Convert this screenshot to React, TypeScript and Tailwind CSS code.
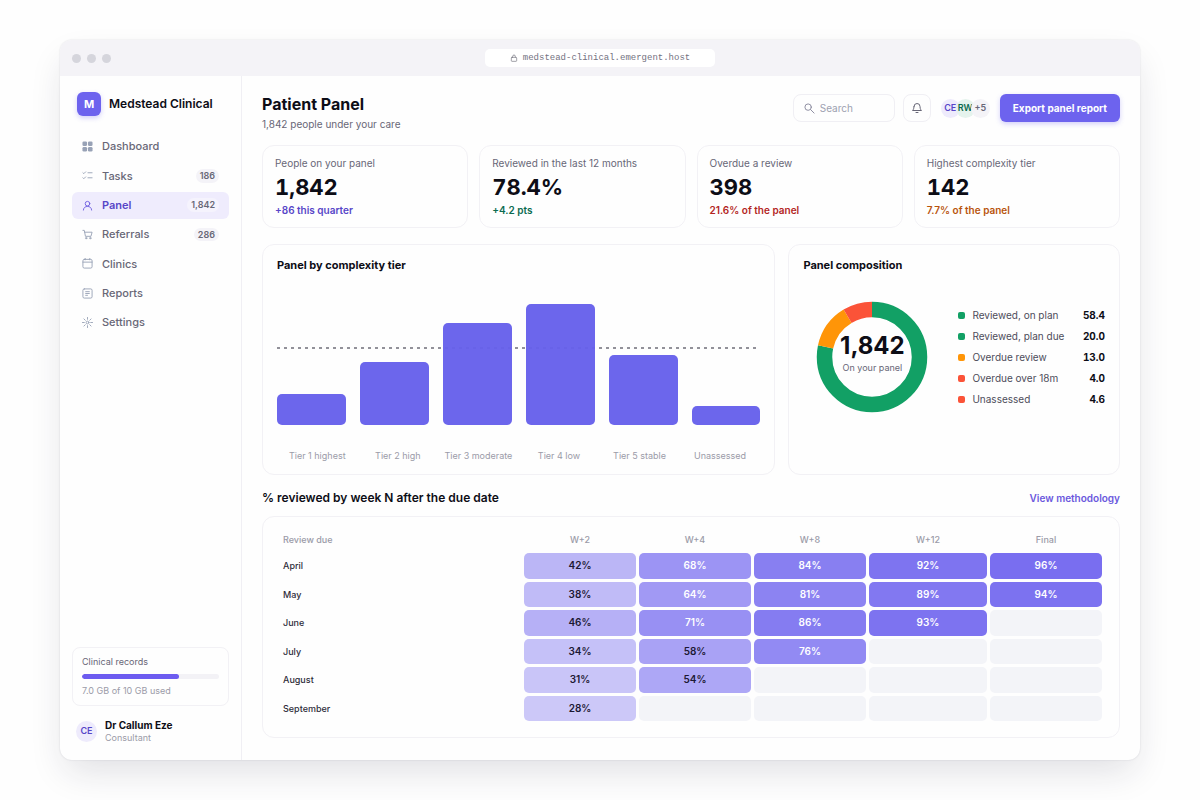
import type { ReactNode } from "react";

const ICONS: Record<string, ReactNode> = {
  dashboard: (
    <g fill="currentColor" stroke="none">
      <rect x="1" y="1" width="10" height="10" rx="3" />
      <rect x="13" y="1" width="10" height="10" rx="3" />
      <rect x="1" y="13" width="10" height="10" rx="3" />
      <rect x="13" y="13" width="10" height="10" rx="3" />
    </g>
  ),
  tasks: <path d="M2 6l2 2 4-4M2 17l2 2 4-4M13 6h9M13 17h9" />,
  panel: (
    <>
      <circle cx="12" cy="8" r="5" />
      <path d="M3 22c0-5 4-8 9-8s9 3 9 8" />
    </>
  ),
  referrals: (
    <>
      <path d="M2 3h3l2.500 13h12L22 7H6" />
      <circle cx="9" cy="20" r="1.500" />
      <circle cx="18" cy="20" r="1.500" />
    </>
  ),
  clinics: (
    <>
      <rect x="2" y="3" width="20" height="19" rx="3" />
      <path d="M2 9h20M7 1v3M17 1v3" />
    </>
  ),
  reports: (
    <>
      <rect x="2" y="2" width="20" height="20" rx="3" />
      <path d="M8 8h8M8 12h8M8 16h4" />
    </>
  ),
  settings: (
    <>
      <circle cx="12" cy="12" r="3" />
      <path d="M12 1v4M12 19v4M1 12h4M19 12h4M4.200 4.200l2.900 2.900M16.900 16.900l2.900 2.900M4.200 19.800l2.900-2.900M16.900 7.100l2.900-2.900" />
    </>
  ),
  search: (
    <>
      <circle cx="9" cy="9" r="7" />
      <path d="M14.500 14.500L22 22" />
    </>
  ),
  bell: <path d="M6 9a6 6 0 0 1 12 0c0 6 3 8 3 8H3s3-2 3-8M10 21h4" />,
  lock: (
    <>
      <rect x="4" y="10" width="16" height="12" rx="2" />
      <path d="M8 10V7a4 4 0 0 1 8 0v3" />
    </>
  ),
};

function Icon({ name, className }: { name: string; className: string }) {
  return (
    <svg
      viewBox="0 0 24 24"
      fill="none"
      stroke="currentColor"
      strokeWidth="2"
      strokeLinecap="round"
      strokeLinejoin="round"
      aria-hidden="true"
      className={`shrink-0 ${className}`}
    >
      {ICONS[name]}
    </svg>
  );
}

const NAV = [
  { label: "Dashboard", icon: "dashboard" },
  { label: "Tasks", icon: "tasks", count: "186" },
  { label: "Panel", icon: "panel", count: "1,842", active: true },
  { label: "Referrals", icon: "referrals", count: "286" },
  { label: "Clinics", icon: "clinics" },
  { label: "Reports", icon: "reports" },
  { label: "Settings", icon: "settings" },
];

const STATS = [
  { label: "People on your panel", value: "1,842", note: "+86 this quarter", color: "text-[#5746c8]" },
  { label: "Reviewed in the last 12 months", value: "78.4%", note: "+4.2 pts", color: "text-[#0b6b50]" },
  { label: "Overdue a review", value: "398", note: "21.6% of the panel", color: "text-[#b3261e]" },
  { label: "Highest complexity tier", value: "142", note: "7.7% of the panel", color: "text-[#b8540c]" },
];

const TIERS = [
  { label: "Tier 1 highest", height: 31 },
  { label: "Tier 2 high", height: 63 },
  { label: "Tier 3 moderate", height: 102 },
  { label: "Tier 4 low", height: 121 },
  { label: "Tier 5 stable", height: 70 },
  { label: "Unassessed", height: 19 },
];

const COMPOSITION = [
  { label: "Reviewed, on plan", value: "58.4", color: "bg-[#12a065]" },
  { label: "Reviewed, plan due", value: "20.0", color: "bg-[#12a065]" },
  { label: "Overdue review", value: "13.0", color: "bg-[#ff9508]" },
  { label: "Overdue over 18m", value: "4.0", color: "bg-[#fb5338]" },
  { label: "Unassessed", value: "4.6", color: "bg-[#fb5338]" },
];

const ARCS = [
  { share: 78.4, start: 0, color: "#12a065" },
  { share: 13, start: 78.4, color: "#ff9508" },
  { share: 8.6, start: 91.4, color: "#fb5338" },
];

const WEEKS = ["W+2", "W+4", "W+8", "W+12", "Final"];

const COHORTS = [
  { month: "April", rates: [42, 68, 84, 92, 96] },
  { month: "May", rates: [38, 64, 81, 89, 94] },
  { month: "June", rates: [46, 71, 86, 93] },
  { month: "July", rates: [34, 58, 76] },
  { month: "August", rates: [31, 54] },
  { month: "September", rates: [28] },
];

function Sidebar() {
  return (
    <aside className="flex w-[182px] shrink-0 flex-col border-r border-[#f0eff4] px-3 pt-4 pb-4">
      <div className="flex items-center gap-2 pl-[5px]">
        <span className="grid size-6 place-items-center rounded-md bg-[#6d63ee] text-[11px] font-bold text-white shadow-[0_2px_5px_rgba(109,99,238,0.3)]">
          M
        </span>
        <span className="text-[12px] font-semibold text-[#0d0d16]">Medstead Clinical</span>
      </div>

      <nav className="mt-[17px] flex h-[203px] flex-col justify-between">
        {NAV.map((item) => (
          <a
            key={item.label}
            href="#"
            className={`flex h-[27px] items-center gap-[9px] rounded-md px-[10px] text-[11px] ${
              item.active ? "bg-[#efecfd] font-semibold text-[#5746c8]" : "font-medium text-[#686777]"
            }`}
          >
            <Icon name={item.icon} className={`size-[11px] ${item.active ? "text-[#6d5ee0]" : "text-[#98a2b6]"}`} />
            <span className="grow">{item.label}</span>
            {item.count && (
              <span
                className={`rounded-full px-1 text-[9px] font-semibold text-[#686777] ${
                  item.active ? "bg-[#f5f3fd]" : "bg-[#f4f3f8]"
                }`}
              >
                {item.count}
              </span>
            )}
          </a>
        ))}
      </nav>

      <div className="mt-auto rounded-lg border border-[#f2f1f5] px-[9px] py-[7px]">
        <div className="text-[9px] leading-[14px] text-[#686777]">Clinical records</div>
        <div className="my-[5px] h-[5px] overflow-hidden rounded-full bg-[#f3f2f6]">
          <div className="h-full w-[71%] rounded-full bg-[#6d5cf0]" />
        </div>
        <div className="text-[9px] leading-[14px] text-[#9b9ba8]">7.0 GB of 10 GB used</div>
      </div>

      <div className="mt-3 flex items-center gap-2 pl-1">
        <span className="grid size-[21px] place-items-center rounded-full bg-[#eeebfc] text-[9px] font-semibold text-[#5746c8]">
          CE
        </span>
        <div>
          <div className="text-[10px] leading-[14px] font-bold text-[#0d0d16]">Dr Callum Eze</div>
          <div className="text-[9px] leading-3 text-[#9b9ba8]">Consultant</div>
        </div>
      </div>
    </aside>
  );
}

function Header() {
  return (
    <header className="flex items-start justify-between">
      <div>
        <h1 className="text-[16px] leading-5 font-bold text-[#0d0d16]">Patient Panel</h1>
        <p className="text-[10px] leading-5 text-[#686777]">1,842 people under your care</p>
      </div>
      <div className="flex items-center gap-2">
        <label className="flex h-7 w-[102px] items-center gap-[5px] rounded-lg border border-[#f0eff4] px-[10px] text-[#85859a]">
          <Icon name="search" className="size-[11px]" />
          <input
            type="search"
            placeholder="Search"
            aria-label="Search"
            className="w-full min-w-0 bg-transparent text-[10px] outline-none placeholder:text-[#9da1b1]"
          />
        </label>
        <button
          aria-label="Notifications"
          className="grid size-7 place-items-center rounded-lg border border-[#f0eff4] text-[#686777]"
        >
          <Icon name="bell" className="size-3" />
        </button>
        <div className="mx-[2px] flex items-center text-[9px] font-semibold">
          <span className="grid size-[19px] place-items-center rounded-full bg-[#eeebfc] text-[#5746c8]">CE</span>
          <span className="-ml-1 grid size-[19px] place-items-center rounded-full bg-[#e5f3ed] text-[#0b6b50]">RW</span>
          <span className="-ml-1 grid size-[19px] place-items-center rounded-full bg-[#f4f3f7] text-[#686777]">+5</span>
        </div>
        <button className="h-7 rounded-md bg-[#6d63ee] px-[13px] text-[10px] font-bold text-white shadow-[0_2px_5px_rgba(109,99,238,0.3)]">
          Export panel report
        </button>
      </div>
    </header>
  );
}

function TierChart() {
  return (
    <section className="flex flex-col rounded-xl border border-[#f2f1f5] px-[14px] py-[11px]">
      <h2 className="text-[11px] leading-[18px] font-bold text-[#0d0d16]">Panel by complexity tier</h2>
      <div className="relative mt-[30px] flex h-[121px] items-end gap-[14px]">
        <svg className="absolute inset-x-0 top-[43px] h-[2px] w-full" aria-hidden="true">
          <line x1="0" y1="1" x2="100%" y2="1" stroke="#6f6d78" strokeWidth="1.300" strokeDasharray="3 4" />
        </svg>
        {TIERS.map((tier) => (
          <div key={tier.label} className="relative flex-1 rounded-[5px] bg-[#6660eb]/96" style={{ height: tier.height }} />
        ))}
      </div>
      <div className="mt-6 grid grid-cols-6 text-center text-[9px] leading-[14px] text-[#9b9ba8]">
        {TIERS.map((tier) => (
          <span key={tier.label}>{tier.label}</span>
        ))}
      </div>
    </section>
  );
}

function Composition() {
  return (
    <section className="rounded-xl border border-[#f2f1f5] px-[14px] py-[11px]">
      <h2 className="text-[11px] leading-[18px] font-bold text-[#0d0d16]">Panel composition</h2>
      <div className="mt-[27px] flex items-center gap-[30px] pl-[13px]">
        <div className="relative size-[112px] shrink-0">
          <svg viewBox="0 0 112 112" className="size-full -rotate-90" aria-hidden="true">
            {ARCS.map((arc) => (
              <circle
                key={arc.color}
                cx="56"
                cy="56"
                r="47.500"
                fill="none"
                stroke={arc.color}
                strokeWidth="15.500"
                pathLength={100}
                strokeDasharray={`${arc.share} ${100 - arc.share}`}
                strokeDashoffset={-arc.start}
              />
            ))}
          </svg>
          <div className="absolute inset-0 flex flex-col items-center justify-center pb-[6px]">
            <span className="text-[24px] leading-7 font-bold text-[#0d0d16]">1,842</span>
            <span className="text-[9px] leading-4 text-[#686777]">On your panel</span>
          </div>
        </div>
        <ul className="flex grow flex-col gap-[3px] text-[10px] leading-[18px]">
          {COMPOSITION.map((row) => (
            <li key={row.label} className="flex items-center">
              <span className={`mr-[7px] size-[7px] rounded-[2px] ${row.color}`} />
              <span className="grow text-[#4d4c5a]">{row.label}</span>
              <span className="font-bold text-[#0d0d16] tabular-nums">{row.value}</span>
            </li>
          ))}
        </ul>
      </div>
    </section>
  );
}

function ReviewTable() {
  return (
    <div className="mt-[9px] rounded-xl border border-[#f2f1f5] px-[14px] pt-[10px] pb-[13px]">
      <table className="h-[197px] w-full table-fixed border-separate border-spacing-[3px] text-[10px]">
        <colgroup>
          <col />
          <col className="w-[112px]" />
          <col className="w-[112px]" />
          <col className="w-[112px]" />
          <col className="w-[118px]" />
          <col className="w-[112px]" />
        </colgroup>
        <thead>
          <tr className="h-5 text-[9px] text-[#9b9ba8]">
            <th className="px-[3px] text-left font-medium">Review due</th>
            {WEEKS.map((week) => (
              <th key={week} className="font-medium">
                {week}
              </th>
            ))}
          </tr>
        </thead>
        <tbody>
          {COHORTS.map((cohort) => (
            <tr key={cohort.month}>
              <th className="px-[3px] text-left text-[9px] font-medium text-[#2e2d3a]">{cohort.month}</th>
              {WEEKS.map((week, i) => {
                const rate = cohort.rates[i];
                if (rate === undefined) return <td key={week} className="rounded-[5px] bg-[#f3f4f8]" />;
                return (
                  <td
                    key={week}
                    className={`rounded-[5px] text-center font-semibold ${rate < 60 ? "text-[#1c1833]" : "text-white"}`}
                    style={{ backgroundColor: `rgba(106, 94, 238, ${0.1 + rate * 0.0083})` }}
                  >
                    {rate}%
                  </td>
                );
              })}
            </tr>
          ))}
        </tbody>
      </table>
    </div>
  );
}

export default function App() {
  return (
    <div className="flex min-h-screen flex-col bg-[#fefefe] px-[60px] py-10 font-['Inter',sans-serif]">
      <div className="flex grow flex-col overflow-hidden rounded-xl bg-[#fefefe] shadow-[0_0_2px_rgba(30,27,60,0.14),0_16px_36px_-6px_rgba(30,27,60,0.14)]">
        <div className="grid h-9 shrink-0 grid-cols-[1fr_230px_1fr] items-center bg-[#f4f3f7] px-3">
          <div className="flex gap-[6px]">
            <span className="size-[9px] rounded-full bg-[#d5d5dc]" />
            <span className="size-[9px] rounded-full bg-[#d5d5dc]" />
            <span className="size-[9px] rounded-full bg-[#d5d5dc]" />
          </div>
          <div className="flex h-[18px] items-center justify-center gap-[5px] rounded-[5px] bg-white font-['Liberation_Mono',monospace] text-[9px] text-[#73727f]">
            <Icon name="lock" className="size-2" />
            <span className="pt-[2px]">medstead-clinical.emergent.host</span>
          </div>
        </div>

        <div className="flex grow">
          <Sidebar />
          <main className="min-w-0 grow px-5 pt-[18px] pb-5">
            <Header />

            <div className="mt-[11px] grid grid-cols-4 gap-[11px]">
              {STATS.map((stat) => (
                <div key={stat.label} className="rounded-xl border border-[#f2f1f5] px-3 pt-[9px] pb-[10px]">
                  <div className="text-[10px] leading-4 text-[#686777]">{stat.label}</div>
                  <div className="text-[22px] leading-8 font-bold text-[#0d0d16] tabular-nums">{stat.value}</div>
                  <div className={`text-[10px] leading-[14px] font-semibold ${stat.color}`}>{stat.note}</div>
                </div>
              ))}
            </div>

            <div className="mt-4 grid h-[231px] grid-cols-[514fr_332fr] gap-[13px]">
              <TierChart />
              <Composition />
            </div>

            <div className="mt-[14px] flex items-center justify-between leading-[18px]">
              <h2 className="text-[12px] font-semibold text-[#0d0d16]">% reviewed by week N after the due date</h2>
              <a href="#" className="text-[10px] font-semibold text-[#6a58dd]">
                View methodology
              </a>
            </div>
            <ReviewTable />
          </main>
        </div>
      </div>
    </div>
  );
}
